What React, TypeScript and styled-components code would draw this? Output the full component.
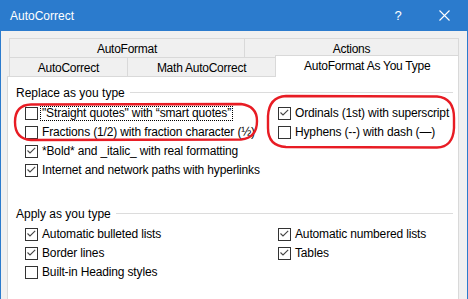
import styled, { createGlobalStyle } from "styled-components";

const GlobalStyle = createGlobalStyle`
  html, body {
    margin: 0;
    padding: 0;
    background: #ffffff;
  }
  body {
    font-family: "Liberation Sans", Arial, sans-serif;
    font-size: 12px;
    color: #000;
  }
`;

const ACCENT = "#2b7bcd";

const Window = styled.div`
  position: relative;
  width: 468px;
  height: 299px;
  overflow: hidden;
  box-sizing: border-box;
  background: #f0f0f0;
  border-left: 1px solid ${ACCENT};
  border-right: 1px solid ${ACCENT};
  display: flex;
  flex-direction: column;
`;

const TitleBar = styled.div`
  height: 31px;
  flex: none;
  background: ${ACCENT};
  color: #fff;
  display: flex;
  align-items: center;
  padding-left: 9px;
  font-size: 12px;
`;

const Title = styled.div`
  flex: 1;
`;

const CaptionButton = styled.div`
  width: 46px;
  height: 31px;
  display: flex;
  align-items: center;
  justify-content: center;
  font-size: 13px;
`;

const Body = styled.div`
  flex: 1;
  padding: 7px 8px 0 6px;
  display: flex;
  flex-direction: column;
  letter-spacing: -0.15px;
`;

const TabRow = styled.div`
  display: flex;
  padding-left: 2px;
  height: 19px;
  letter-spacing: -0.25px;
`;

const Tab = styled.div<{ $w: number; $first?: boolean }>`
  box-sizing: border-box;
  width: ${(p) => p.$w}px;
  margin-left: ${(p) => (p.$first ? 0 : -1)}px;
  height: 19px;
  border: 1px solid #d9d9d9;
  border-bottom: none;
  background: #f0f0f0;
  display: flex;
  align-items: center;
  justify-content: center;
  padding-top: 1px;
`;

const ActiveTab = styled.div<{ $w: number }>`
  position: relative;
  z-index: 2;
  box-sizing: border-box;
  width: ${(p) => p.$w}px;
  margin-left: -1px;
  margin-top: -2px;
  height: 22px;
  border: 1px solid #d9d9d9;
  border-bottom: none;
  background: #fff;
  display: flex;
  align-items: center;
  justify-content: center;
  padding-bottom: 1px;
`;

const Panel = styled.div`
  position: relative;
  flex: 1;
  background: #fff;
  border: 1px solid #d9d9d9;
  border-bottom: none;
  padding: 8px 5px 0 8px;
`;

const GroupHeader = styled.div<{ $gapTop?: number }>`
  display: flex;
  align-items: center;
  gap: 5px;
  height: 15px;
  margin-top: ${(p) => p.$gapTop ?? 0}px;
  letter-spacing: 0;
`;

const Rule = styled.div`
  flex: 1;
  height: 1px;
  background: #dcdcdc;
`;

const OptionGrid = styled.div`
  display: grid;
  grid-template-columns: 253px 1fr;
  grid-auto-rows: 19px;
  margin-top: 4px;
  padding-left: 9px;
`;

const Option = styled.div<{ $col?: number }>`
  display: flex;
  align-items: center;
  grid-column: ${(p) => p.$col ?? 1};
  white-space: nowrap;
`;

const Box = styled.div`
  box-sizing: border-box;
  width: 13px;
  height: 13px;
  flex: none;
  border: 1px solid #333;
  background: #fff;
  display: flex;
`;

const Label = styled.span<{ $focus?: boolean }>`
  margin-left: 2px;
  padding: 0 1px;
  line-height: 13px;
  border: 1px ${(p) => (p.$focus ? "dotted #000" : "solid transparent")};
`;

const Marks = styled.svg`
  position: absolute;
  left: 0;
  top: 0;
  pointer-events: none;
  z-index: 5;
`;

function Check({ on, label, focus, col }: { on?: boolean; label: string; focus?: boolean; col?: number }) {
  return (
    <Option $col={col}>
      <Box>
        {on && (
          <svg width="11" height="11" viewBox="0 0 11 11">
            <polyline points="1.5,4.5 4,7 9.2,1.8" fill="none" stroke="#444" strokeWidth="1.1" />
          </svg>
        )}
      </Box>
      <Label $focus={focus}>{label}</Label>
    </Option>
  );
}

export default function App() {
  return (
    <>
      <GlobalStyle />
      <Window>
        <TitleBar>
          <Title>AutoCorrect</Title>
          <CaptionButton>?</CaptionButton>
          <CaptionButton>
            <svg width="11" height="11" viewBox="0 0 11 11">
              <path d="M0.5 0.5 L10.5 10.5 M10.5 0.5 L0.5 10.5" stroke="#fff" strokeWidth="1.1" />
            </svg>
          </CaptionButton>
        </TitleBar>
        <Body>
          <TabRow>
            <Tab $w={236} $first>AutoFormat</Tab>
            <Tab $w={215}>Actions</Tab>
          </TabRow>
          <TabRow>
            <Tab $w={119} $first>AutoCorrect</Tab>
            <Tab $w={150}>Math AutoCorrect</Tab>
            <ActiveTab $w={184}>AutoFormat As You Type</ActiveTab>
          </TabRow>
          <Panel>
            <GroupHeader>
              <span>Replace as you type</span>
              <Rule />
            </GroupHeader>
            <OptionGrid>
              <Check label={'"Straight quotes" with \u201Csmart quotes\u201D'} focus />
              <Check col={2} on label="Ordinals (1st) with superscript" />
              <Check label="Fractions (1/2) with fraction character (½)" />
              <Check col={2} label="Hyphens (--) with dash (—)" />
              <Check on label="*Bold* and _italic_ with real formatting" />
              <Check on label="Internet and network paths with hyperlinks" />
            </OptionGrid>
            <GroupHeader $gapTop={26}>
              <span>Apply as you type</span>
              <Rule />
            </GroupHeader>
            <OptionGrid>
              <Check on label="Automatic bulleted lists" />
              <Check col={2} on label="Automatic numbered lists" />
              <Check on label="Border lines" />
              <Check col={2} on label="Tables" />
              <Check label="Built-in Heading styles" />
            </OptionGrid>
          </Panel>
        </Body>
        <Marks width="468" height="299" viewBox="0 0 468 299">
          <path
            d="M30 104.5 L240 104 Q256 106 256 121 Q256 138 240 139.5 L30 140 Q14 139 14 122 Q14 105 30 104.5 Z"
            fill="none"
            stroke="#e81c24"
            strokeWidth="2.4"
          />
          <path
            d="M285 96 L436 96.5 Q453 98 453 118 L453 128 Q452 147 436 147.5 L285 147 Q267 146 267 128 L267 116 Q268 97 285 96 Z"
            fill="none"
            stroke="#e81c24"
            strokeWidth="2.4"
          />
        </Marks>
      </Window>
    </>
  );
}
